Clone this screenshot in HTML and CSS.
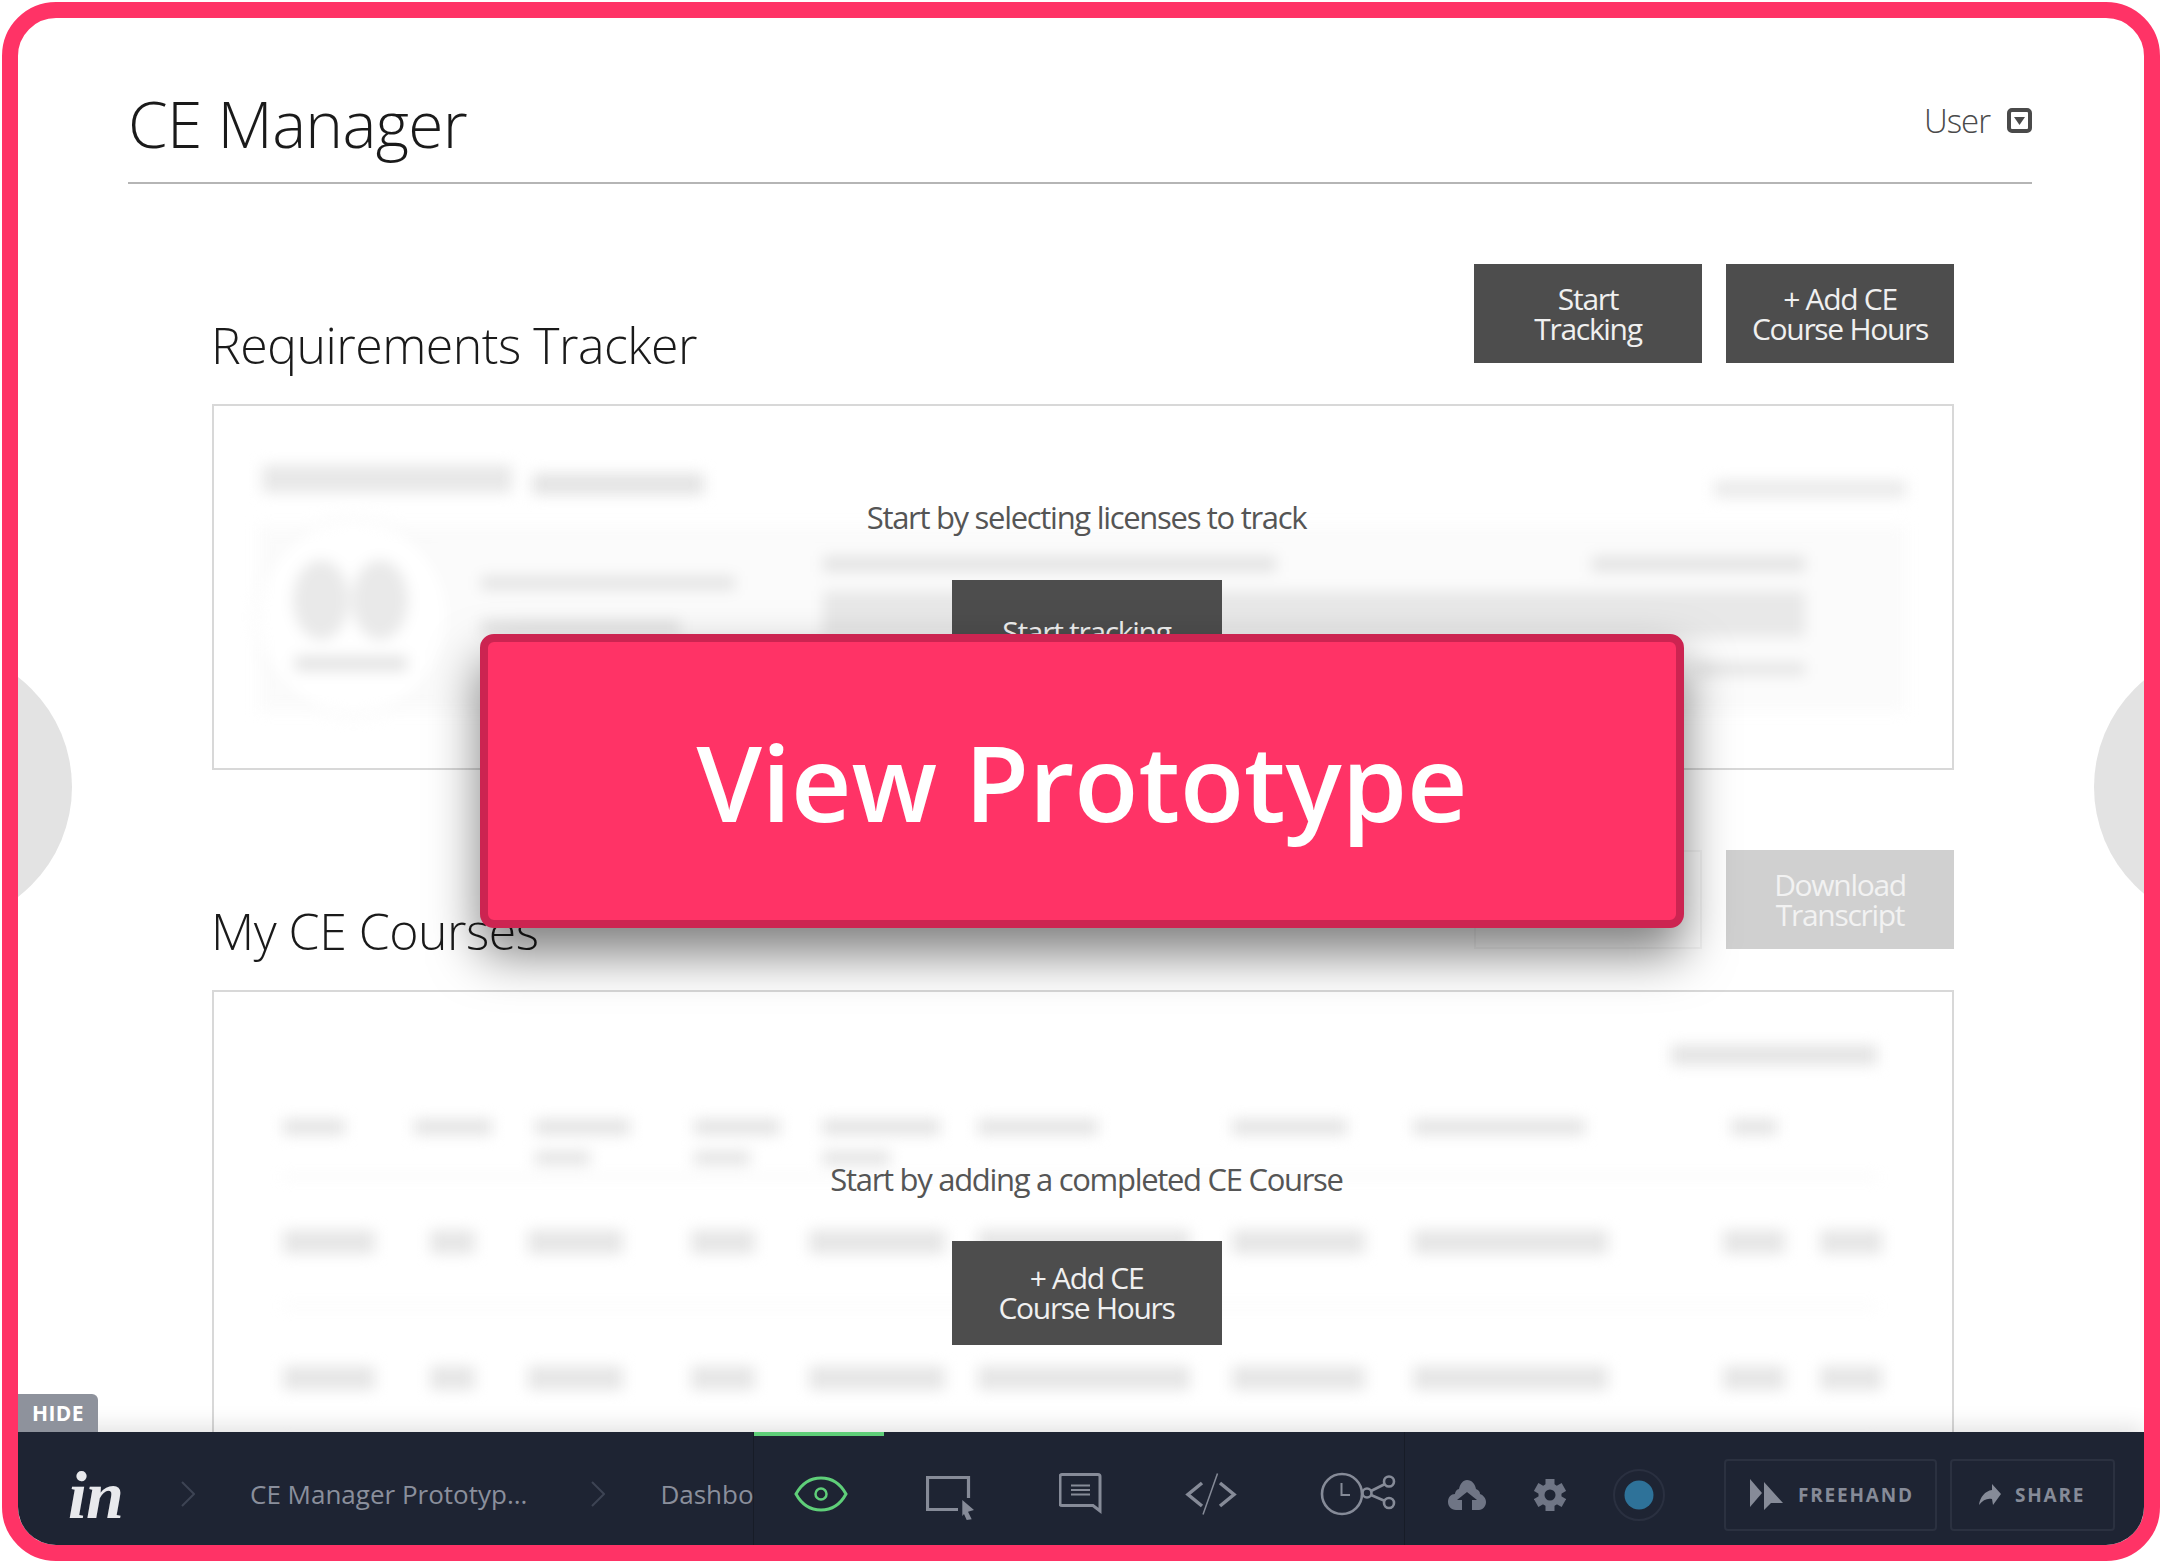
FILE: index.html
```html
<!DOCTYPE html>
<html lang="en">
<head>
<meta charset="utf-8">
<title>CE Manager</title>
<link rel="stylesheet" href="styles.css">
</head>
<body>
<div class="frame">
  <main class="screen">
    <header class="page-head">
      <h1 class="page-title">CE Manager</h1>
      <div class="user">User
        <svg class="user-icon" width="25" height="25" viewBox="0 0 25 25"><rect x="2" y="2" width="21" height="21" rx="3" fill="none" stroke="#4a4a4a" stroke-width="4"/><path d="M7 9h11l-5.500 8z" fill="#4a4a4a"/></svg>
      </div>
    </header>

    <section class="section">
      <div class="section-head">
        <h2 class="section-title">Requirements Tracker</h2>
        <div class="actions">
          <button class="btn">Start<br>Tracking</button>
          <button class="btn">+ Add CE<br>Course Hours</button>
        </div>
      </div>
      <div class="panel panel-tracker">
        <div class="skeleton sk-tracker">
          <div class="sk-head">
            <span class="bar bar-title" style="width:250px"></span>
            <span class="bar bar-sub" style="width:172px"></span>
            <span class="bar bar-right" style="width:192px"></span>
          </div>
          <div class="sk-card">
            <div class="sk-avatar">
              <div class="sk-ovals"><span class="oval"></span><span class="oval"></span></div>
              <span class="bar bar-avatar"></span>
            </div>
            <div class="sk-details">
              <span class="bar bar-line" style="width:254px"></span>
              <span class="bar bar-line" style="width:199px"></span>
            </div>
            <div class="sk-main">
              <div class="sk-main-top">
                <span class="bar bar-top" style="width:453px"></span>
                <span class="bar bar-top" style="width:213px"></span>
              </div>
              <span class="bar bar-big"></span>
              <span class="bar bar-end" style="width:110px"></span>
            </div>
          </div>
        </div>
        <div class="empty empty-tracker">
          <p class="empty-text">Start by selecting licenses to track</p>
          <button class="btn btn-wide">Start tracking</button>
        </div>
      </div>
    </section>

    <section class="section">
      <div class="section-head">
        <h2 class="section-title">My CE Courses</h2>
        <div class="actions">
          <button class="btn btn-ghost"></button>
          <button class="btn btn-disabled">Download<br>Transcript</button>
        </div>
      </div>
      <div class="panel panel-courses">
        <div class="skeleton sk-courses">
          <div class="sk-filter"><span class="bar bar-filter"></span></div>
          <div class="sk-table-head">
            <span class="bar bar-th" style="width:62px"></span>
            <span class="bar bar-th" style="width:78px"></span>
            <div class="sk-th-stack"><span class="bar bar-th" style="width:95px"></span><span class="bar bar-th2" style="width:55px"></span></div>
            <div class="sk-th-stack"><span class="bar bar-th" style="width:86px"></span><span class="bar bar-th2" style="width:56px"></span></div>
            <div class="sk-th-stack"><span class="bar bar-th" style="width:118px"></span><span class="bar bar-th2" style="width:68px"></span></div>
            <span class="bar bar-th" style="width:120px"></span>
            <span class="bar bar-th" style="width:115px"></span>
            <span class="bar bar-th" style="width:172px"></span>
            <span class="bar bar-th" style="width:46px"></span>
          </div>
          <div class="sk-row">
            <span class="bar bar-td" style="width:92px"></span>
            <span class="bar bar-td" style="width:45px"></span>
            <span class="bar bar-td" style="width:95px"></span>
            <span class="bar bar-td" style="width:64px"></span>
            <span class="bar bar-td" style="width:136px"></span>
            <span class="bar bar-td" style="width:212px"></span>
            <span class="bar bar-td" style="width:133px"></span>
            <span class="bar bar-td" style="width:195px"></span>
            <span class="bar bar-td" style="width:62px"></span>
            <span class="bar bar-td" style="width:62px"></span>
          </div>
          <div class="sk-row">
            <span class="bar bar-td" style="width:92px"></span>
            <span class="bar bar-td" style="width:45px"></span>
            <span class="bar bar-td" style="width:95px"></span>
            <span class="bar bar-td" style="width:64px"></span>
            <span class="bar bar-td" style="width:136px"></span>
            <span class="bar bar-td" style="width:212px"></span>
            <span class="bar bar-td" style="width:133px"></span>
            <span class="bar bar-td" style="width:195px"></span>
            <span class="bar bar-td" style="width:62px"></span>
            <span class="bar bar-td" style="width:62px"></span>
          </div>
        </div>
        <div class="empty empty-courses">
          <p class="empty-text">Start by adding a completed CE Course</p>
          <button class="btn btn-wide">+ Add CE<br>Course Hours</button>
        </div>
      </div>
    </section>
  </main>

  <span class="side-circle side-left"></span>
  <span class="side-circle side-right"></span>

  <a class="cta">View Prototype</a>

  <footer class="toolbar">
    <span class="hide-tab">HIDE</span>
    <nav class="crumbs">
      <span class="logo">in</span>
      <svg class="chev chev-first" width="14" height="26" viewBox="0 0 14 26"><path d="M1 1l12 12L1 25" fill="none" stroke="#3d4454" stroke-width="2"/></svg>
      <span class="crumb crumb-project">CE Manager Prototyp...</span>
      <svg class="chev chev-second" width="14" height="26" viewBox="0 0 14 26"><path d="M1 1l12 12L1 25" fill="none" stroke="#3d4454" stroke-width="2"/></svg>
      <span class="crumb crumb-screen">Dashboard</span>
    </nav>
    <div class="tabs">
      <div class="tab tab-active">
        <svg width="54" height="36" viewBox="0 0 54 36"><path d="M2 18C8 7 17 2 27 2s19 5 25 16c-6 11-15 16-25 16S8 29 2 18z" fill="none" stroke="#5fcf79" stroke-width="3"/><circle cx="27" cy="18" r="5.500" fill="none" stroke="#5fcf79" stroke-width="2.500"/></svg>
      </div>
      <div class="tab">
        <svg class="icon-screen" width="50" height="45" viewBox="0 0 50 45"><path d="M32 33.500H1.500v-32h41V22" fill="none" stroke="#868b98" stroke-width="3.200"/><path d="M36.300 24L48 34l-6 1.700 3.700 7.600-5 .7-2.700-6-1.700 2z" fill="#868b98"/></svg>
      </div>
      <div class="tab">
        <svg width="44" height="42" viewBox="0 0 44 42"><path d="M3 1.500h36a2 2 0 0 1 2 2V38l-7-5.500H3a2 2 0 0 1-2-2v-27a2 2 0 0 1 2-2z" fill="none" stroke="#868b98" stroke-width="3"/><path d="M12 12.500h19M12 17h19M12 21.500h19" stroke="#868b98" stroke-width="2"/></svg>
      </div>
      <div class="tab">
        <svg width="54" height="42" viewBox="0 0 54 42"><path d="M18 10L4 21.500 18 33M36 10l14 11.500L36 33" fill="none" stroke="#868b98" stroke-width="3.500"/><path d="M33.500 0.500L19 41.500" stroke="#868b98" stroke-width="1.500"/></svg>
      </div>
      <div class="tab tab-last">
        <svg width="76" height="44" viewBox="0 0 76 44"><circle cx="22" cy="22" r="20" fill="none" stroke="#868b98" stroke-width="2.600"/><path d="M21.500 11v12H30" fill="none" stroke="#868b98" stroke-width="2"/><circle cx="47" cy="21" r="4.500" fill="none" stroke="#868b98" stroke-width="2.600"/><circle cx="69" cy="9.500" r="5" fill="none" stroke="#868b98" stroke-width="2.600"/><circle cx="69" cy="31" r="5" fill="none" stroke="#868b98" stroke-width="2.600"/><path d="M51 19l14-7M51 23l14 6" stroke="#868b98" stroke-width="2.600"/></svg>
      </div>
    </div>
    <div class="tools">
      <svg class="tool tool-cloud" width="38" height="30" viewBox="0 0 38 30"><path d="M8 30C3 30 0 26 0 22c0-5 3-8 7-8 0-2 2-5 4-5 1-5 4-9 8-9 5 0 8 4 9 9 3 1 4 3 4 5 3 1 6 4 6 8 0 4-3 8-7 8h-7V20h5L19 12 9 20h5v10z" fill="#6f7585"/></svg>
      <svg class="tool tool-gear" width="32" height="32" viewBox="0 0 32 32"><g fill="#6f7585"><rect x="11.500" y="0" width="9" height="32"/><rect x="11.500" y="0" width="9" height="32" transform="rotate(60 16 16)"/><rect x="11.500" y="0" width="9" height="32" transform="rotate(120 16 16)"/></g><circle cx="16" cy="16" r="8.500" fill="none" stroke="#6f7585" stroke-width="6"/><circle cx="16" cy="16" r="5.500" fill="#1e2433"/></svg>
      <svg class="tool tool-dot" width="52" height="52" viewBox="0 0 52 52"><circle cx="26" cy="26" r="25" fill="none" stroke="#2a3040" stroke-width="2"/><circle cx="26" cy="26" r="14.500" fill="#2e7299"/></svg>
      <span class="tool-btn btn-freehand">
        <svg width="33" height="31" viewBox="0 0 33 31"><path d="M0 0l12 14L0 28z" fill="#868b98"/><path d="M14 3l19 21H21l-7 7z" fill="#868b98"/></svg>
        FREEHAND
      </span>
      <span class="tool-btn btn-share">
        <svg width="22" height="22" viewBox="0 0 22 22"><path d="M13 0l9 10-8 11-1-6C8 14 4 16 0 21 1 13 6 7 13 6z" fill="#868b98"/></svg>
        SHARE
      </span>
    </div>
  </footer>
</div>
</body>
</html>
```

FILE: styles.css
```css
* { box-sizing: border-box; }
html, body { margin: 0; padding: 0; background: #fff; }
body { font-family: "Open Sans", "Noto Sans", sans-serif; }

.frame {
  position: relative;
  width: 2158px;
  height: 1559px;
  margin: 2px;
  border: 16px solid #ff3366;
  border-radius: 54px;
  overflow: hidden;
  background: #fff;
  display: flex;
  flex-direction: column;
}

.screen {
  flex: 1;
  min-height: 0;
  overflow: hidden;
  padding: 0 112px 0 110px;
}

.page-head {
  height: 166px;
  display: flex;
  justify-content: space-between;
  border-bottom: 2px solid #b5b5b5;
}
.page-title {
  margin: 66px 0 0;
  font-size: 64px;
  line-height: 80px;
  font-weight: 350;
  color: #1a1a1a;
  letter-spacing: -0.7px;
}
.user {
  margin-top: 72px;
  height: 60px;
  display: flex;
  align-items: center;
  gap: 17px;
  font-size: 33px;
  font-weight: 350;
  letter-spacing: -1px;
  color: #4a4a4a;
}

.section { margin: 80px 78px 0 86px; }
.section-head {
  display: flex;
  justify-content: space-between;
  align-items: flex-end;
  margin-bottom: 41px;
}
.section-title {
  margin: 0 0 -14px -3px;
  font-size: 50px;
  line-height: 64px;
  font-weight: 350;
  letter-spacing: -0.5px;
  color: #1a1a1a;
}
.actions { display: flex; gap: 24px; }

.btn {
  display: block;
  width: 228px;
  height: 99px;
  padding: 0;
  border: 0;
  background: #4d4d4d;
  color: #f0f0f0;
  font-family: "Open Sans", sans-serif;
  font-size: 30px;
  line-height: 30px;
  letter-spacing: -1.3px;
}
.btn-wide { width: 270px; height: 104px; }
.btn-ghost { background: #fff; border: 2px solid #f6f6f6; }
.btn-disabled { background: #d0d0d0; color: #f2f2f2; }

.panel {
  position: relative;
  margin-left: -2px;
  border: 2px solid #d8d8d8;
}
.panel-tracker { height: 366px; }
.panel-courses { height: 600px; }

.skeleton { filter: blur(7px); }
.bar { display: block; background: #e4e4e4; }
.sk-tracker { padding: 59px 46px 0 44px; }
.sk-head { display: flex; gap: 20px; height: 33px; margin-bottom: 28px; padding-left: 4px; }
.bar-title { height: 28px; background: #e8e8e8; }
.bar-sub { height: 22px; margin-top: 8px; }
.bar-right { height: 18px; margin: 15px 0 0 auto; background: #ebebeb; }
.sk-card { display: flex; height: 186px; background: #fbfbfb; }
.sk-avatar {
  flex: none;
  width: 197px;
  height: 200px;
  margin: -9px 0 0 -3px;
  border: 2px solid #f0f0f0;
  border-radius: 50%;
  background: #fff;
  display: flex;
  flex-direction: column;
  align-items: center;
  padding: 41px 6px 0 0;
  gap: 16px;
}
.sk-ovals { display: flex; gap: 3px; }
.oval { width: 56px; height: 80px; border-radius: 50%; background: #e9e9e9; }
.bar-avatar { width: 112px; height: 15px; }
.sk-details { width: 254px; margin-left: 29px; padding-top: 50px; display: flex; flex-direction: column; gap: 30px; flex: none; }
.bar-line { height: 14px; }
.sk-main { width: 982px; margin-left: 88px; padding-top: 30px; flex: none; }
.sk-main-top { display: flex; justify-content: space-between; }
.bar-top { height: 16px; }
.bar-big { height: 46px; margin-top: 19px; background: #e8e8e8; }
.bar-end { height: 12px; margin: 26px 0 0 auto; }

.sk-courses { padding: 53px 75px 0 69px; }
.sk-filter { display: flex; justify-content: flex-end; height: 20px; margin-bottom: 54px; }
.bar-filter { width: 206px; height: 20px; }
.sk-table-head {
  display: grid;
  grid-template-columns: 131px 121px 159px 128px 156px 254px 181px 318px 1fr;
  padding-bottom: 11px;
  border-bottom: 2px solid #eeeeee;
}
.sk-th-stack { display: flex; flex-direction: column; gap: 16px; }
.bar-th { height: 16px; }
.bar-th2 { height: 14px; }
.sk-row {
  display: grid;
  grid-template-columns: 147px 98px 163px 118px 169px 254px 181px 310px 97px 1fr;
  padding: 52px 0 51px;
  border-bottom: 2px solid #f2f2f2;
}
.sk-row + .sk-row { padding-top: 59px; }
.bar-td { height: 24px; background: #e6e6e6; }

.empty {
  position: absolute;
  left: 0;
  right: 0;
  display: flex;
  flex-direction: column;
  align-items: center;
  padding-left: 7px;
}
.empty-tracker { top: 91px; gap: 43px; }
.empty-courses { top: 167px; gap: 42px; }
.empty-text {
  margin: 0;
  font-size: 31px;
  line-height: 40px;
  letter-spacing: -1.3px;
  color: #555;
}

.side-circle {
  position: absolute;
  top: 630px;
  width: 278px;
  height: 278px;
  border-radius: 50%;
  background: #e3e3e3;
}
.side-left { left: -224px; }
.side-right { right: -228px; }

.cta {
  position: absolute;
  left: 462px;
  top: 616px;
  width: 1204px;
  height: 294px;
  display: flex;
  align-items: center;
  justify-content: center;
  background: #ff3366;
  border: 8px solid #cc2451;
  border-radius: 14px;
  box-shadow: 0 26px 50px rgba(0, 0, 0, 0.5);
  color: #fff;
  font-size: 105px;
  font-weight: 600;
}

.toolbar {
  position: relative;
  flex: none;
  height: 113px;
  display: flex;
  background: #1e2433;
  box-shadow: 0 -5px 22px rgba(0, 0, 0, 0.12);
}
.hide-tab {
  position: absolute;
  left: 0;
  top: -38px;
  width: 80px;
  height: 38px;
  display: flex;
  align-items: center;
  justify-content: center;
  background: #8e929c;
  border-radius: 0 6px 0 0;
  color: #fff;
  font-size: 21px;
  font-weight: 700;
  letter-spacing: 0.4px;
}

.crumbs {
  width: 735px;
  flex: none;
  overflow: hidden;
  display: flex;
  align-items: center;
  padding: 11px 0 0 50px;
  white-space: nowrap;
}
.logo {
  width: 54px;
  flex: none;
  margin-top: 2px;
  font-family: "Liberation Serif", serif;
  font-weight: 700;
  font-style: italic;
  font-size: 68px;
  line-height: 60px;
  letter-spacing: -1px;
  color: #e8e9ec;
}
.chev { flex: none; }
.chev-first { margin-left: 59px; }
.chev-second { margin-left: 64px; }
.crumb { flex: none; font-size: 26px; color: #8a8f9c; }
.crumb-project { margin-left: 55px; }
.crumb-screen { margin-left: 55px; }

.tabs {
  flex: none;
  width: 652px;
  display: flex;
  border-left: 1px solid #171c27;
  border-right: 1px solid #171c27;
}
.tab {
  flex: none;
  width: 130px;
  display: flex;
  align-items: center;
  justify-content: center;
  padding: 11px 0 0 3px;
}
.tab-active { box-shadow: inset 0 4px 0 #5fcf79; }
.tab-last { padding-left: 38px; }
.icon-screen { margin-top: 8px; }

.tools {
  flex: 1;
  display: flex;
  align-items: center;
  padding-top: 12px;
}
.tool { flex: none; }
.tool-cloud { margin-left: 43px; }
.tool-gear { margin-left: 48px; }
.tool-dot { margin-left: 47px; }
.tool-btn {
  display: flex;
  align-items: center;
  height: 72px;
  border: 2px solid #2b3140;
  border-radius: 4px;
  color: #868b98;
  font-size: 19px;
  font-weight: 700;
  letter-spacing: 1.8px;
}
.btn-freehand { margin-left: 59px; width: 213px; padding-left: 24px; gap: 15px; }
.btn-share { margin-left: 13px; width: 165px; padding-left: 27px; gap: 14px; }
```
